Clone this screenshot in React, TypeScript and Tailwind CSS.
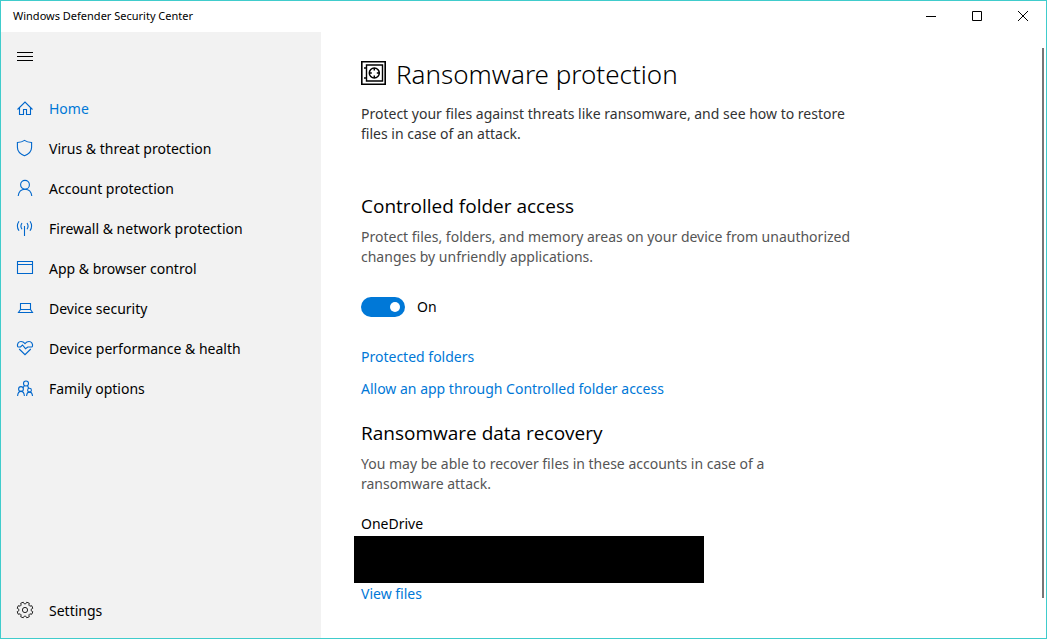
import React, { useState } from "react";

interface NavItem {
  label: string;
  icon: React.ReactNode;
}

const Icon: React.FC<{ children: React.ReactNode }> = ({ children }) => (
  <svg
    className="h-5 w-5 shrink-0"
    viewBox="0 0 20 20"
    fill="none"
    stroke="currentColor"
    strokeWidth="1.1"
    aria-hidden="true"
  >
    {children}
  </svg>
);

const navItems: NavItem[] = [
  {
    label: "Home",
    icon: (
      <Icon>
        <path d="M2.5 11.5 10 4l7.5 7.5M4.5 9.8v6.7h4v-5h3v5h4V9.8" />
      </Icon>
    ),
  },
  {
    label: "Virus & threat protection",
    icon: (
      <Icon>
        <path d="M9.5 2.4c2 1.4 4.3 2 7.1 2.1v4.7c0 3.9-2.9 6.8-7.1 8.5-4.2-1.7-7.1-4.6-7.1-8.5V4.5c2.8-.1 5.1-.7 7.1-2.1z" />
      </Icon>
    ),
  },
  {
    label: "Account protection",
    icon: (
      <Icon>
        <circle cx="10" cy="6.8" r="4.4" />
        <path d="M3.2 18c.5-4 3.1-6.8 6.8-6.8s6.3 2.8 6.8 6.8" />
      </Icon>
    ),
  },
  {
    label: "Firewall & network protection",
    icon: (
      <Icon>
        <path d="M9.5 8v10M4 3.2c-2 3-2 6.6 0 9.6M15 3.2c2 3 2 6.6 0 9.6M7 5c-1.4 2-1.4 4.2 0 6.2M12 5c1.4 2 1.4 4.2 0 6.2" />
      </Icon>
    ),
  },
  {
    label: "App & browser control",
    icon: (
      <Icon>
        <path d="M2.5 3.5h15v12h-15zM2.5 6.5h15" />
      </Icon>
    ),
  },
  {
    label: "Device security",
    icon: (
      <Icon>
        <path d="M5.5 11.5v-6h10v6zM5.5 11.5l-2 3h14l-2-3" />
      </Icon>
    ),
  },
  {
    label: "Device performance & health",
    icon: (
      <Icon>
        <path d="M2.8 9C1.6 6 3.6 3.5 6 3.5c1.800 0 3 .9 4 2.200 1-1.300 2.200-2.200 4-2.200 2.400 0 4.400 2.500 3.200 5.500M4.200 11 10 16.700l5.800-5.700" />
        <path d="M2.800 9h2.700l2-2 3 3.700L12.800 9h4.400" />
      </Icon>
    ),
  },
  {
    label: "Family options",
    icon: (
      <Icon>
        <circle cx="11" cy="5.500" r="2.500" />
        <circle cx="6" cy="11" r="2.400" />
        <circle cx="14.500" cy="12.200" r="1.900" />
        <path d="M2.600 18c.2-2.900 1.500-4.600 3.400-4.600s3.200 1.700 3.400 4.600M11.600 18c.1-2.400 1.200-3.900 2.900-3.900s2.800 1.500 3 3.900M9.300 7.700l-1.200 2M12.600 7.700l1 2.600" />
      </Icon>
    ),
  },
];

const gearPath = (() => {
  const teeth = 8;
  const points: string[] = [];
  for (let i = 0; i < teeth; i++) {
    const a = (i / teeth) * Math.PI * 2;
    [
      [-0.28, 6.2],
      [-0.17, 8],
      [0.17, 8],
      [0.28, 6.2],
    ].forEach(([offset, r]) => {
      const t = a + offset + Math.PI / 8;
      points.push(`${(10 + r * Math.cos(t)).toFixed(2)} ${(10 + r * Math.sin(t)).toFixed(2)}`);
    });
  }
  return `M${points.join("L")}Z`;
})();

const VaultIcon = () => (
  <svg className="h-6 w-[25px] shrink-0" viewBox="0 0 25 24" fill="none" stroke="#000" aria-hidden="true">
    <path d="M.8.8h23.4v22.4H.8z" strokeWidth="1.6" />
    <path d="M5.5 4h16v16h-16z" strokeWidth="1.4" />
    <path d="M3 7h2.5M3 17h2.5" strokeWidth="1.6" />
    <circle cx="13.3" cy="12" r="5" strokeWidth="1.5" />
    <path d="M13.3 7v2.5M13.3 14.5V17M8.3 12h2.5M15.8 12h2.5" strokeWidth="1.5" />
  </svg>
);

const TitleBar = () => (
  <header className="flex h-[31px] shrink-0 items-start justify-between bg-white pl-3">
    <span className="text-[11px] leading-[30px]">Windows Defender Security Center</span>
    <div className="flex h-[30px]">
      <button aria-label="Minimize" className="flex w-[46px] items-center justify-center">
        <svg className="h-3 w-3" viewBox="0 0 12 12" stroke="#000">
          <path d="M1 6.5h10" />
        </svg>
      </button>
      <button aria-label="Maximize" className="flex w-[46px] items-center justify-center">
        <svg className="h-3 w-3" viewBox="0 0 12 12" stroke="#000" fill="none">
          <path d="M1.5 1.5h9v9h-9z" />
        </svg>
      </button>
      <button aria-label="Close" className="flex w-[46px] items-center justify-center">
        <svg className="h-3 w-3" viewBox="0 0 12 12" stroke="#000">
          <path d="m1 1 10 10M11 1 1 11" />
        </svg>
      </button>
    </div>
  </header>
);

const Sidebar = () => (
  <aside className="flex w-80 shrink-0 flex-col bg-[#f2f2f2] pb-2">
    <button aria-label="Menu" className="flex h-12 w-12 items-center justify-center">
      <svg className="h-5 w-5" viewBox="0 0 20 20" stroke="#000">
        <path d="M2 6.5h16M2 10.5h16M2 14.5h16" />
      </svg>
    </button>
    <nav className="mt-2">
      {navItems.map((item, i) => (
        <a
          key={item.label}
          href="#"
          aria-current={i === 0 ? "page" : undefined}
          className="flex h-10 items-center gap-3.5 pl-3.5 text-[#0067cc]"
        >
          {item.icon}
          <span className={i === 0 ? "pt-0.5 text-[#0078d7]" : "pt-0.5 text-black"}>{item.label}</span>
        </a>
      ))}
    </nav>
    <a href="#" className="mt-auto flex h-10 items-center gap-3.5 pl-3.5">
      <Icon>
        <path d={gearPath} stroke="#222" strokeWidth="1" strokeLinejoin="round" />
        <circle cx="10" cy="10" r="2.6" stroke="#222" strokeWidth="1" />
      </Icon>
      <span className="pt-0.5">Settings</span>
    </a>
  </aside>
);

const App: React.FC = () => {
  const [enabled, setEnabled] = useState(true);

  return (
    <div className="flex h-screen flex-col border border-[#40cccc] bg-white font-['Noto_Sans','Open_Sans',sans-serif] text-sm leading-5 text-black">
      <TitleBar />
      <div className="flex min-h-0 flex-1">
        <Sidebar />
        <main className="relative min-w-0 flex-1 overflow-hidden pt-[22px] pl-10">
          <div className="flex items-center gap-2.5">
            <VaultIcon />
            <h1 className="pt-0.5 text-[26px] leading-9 font-light">Ransomware protection</h1>
          </div>
          <p className="mt-3 max-w-[500px] text-[#333]">
            Protect your files against threats like ransomware, and see how to restore files in case of an attack.
          </p>

          <section className="mt-12">
            <h2 className="font-['Open_Sans','Noto_Sans',sans-serif] text-[19px] leading-7">
              Controlled folder access
            </h2>
            <p className="mt-[7px] max-w-[500px] text-[#555]">
              Protect files, folders, and memory areas on your device from unauthorized changes by unfriendly
              applications.
            </p>
            <label className="mt-[29px] flex w-fit items-center gap-3">
              <input
                type="checkbox"
                role="switch"
                checked={enabled}
                onChange={(e) => setEnabled(e.target.checked)}
                className="flex h-5 w-11 appearance-none items-center rounded-full bg-[#888] px-[5px] before:h-2.5 before:w-2.5 before:rounded-full before:bg-white checked:justify-end checked:bg-[#0078d7]"
              />
              <span className="pt-px">{enabled ? "On" : "Off"}</span>
            </label>
            <div className="mt-[30px] flex flex-col items-start gap-3 text-[#0078d7]">
              <a href="#">Protected folders</a>
              <a href="#">Allow an app through Controlled folder access</a>
            </div>
          </section>

          <section className="mt-5">
            <h2 className="font-['Open_Sans','Noto_Sans',sans-serif] text-[19px] leading-7">
              Ransomware data recovery
            </h2>
            <p className="mt-[7px] max-w-[430px] text-[#555]">
              You may be able to recover files in these accounts in case of a ransomware attack.
            </p>
            <h3 className="mt-5">OneDrive</h3>
            <div className="mt-0.5 -ml-[7px] h-[47px] w-[350px] bg-black" />
            <a href="#" className="mt-px block w-fit text-[#0078d7]">
              View files
            </a>
          </section>

          {/* scroll thumb */}
          <div className="absolute top-4 right-0.5 bottom-10 w-0.5 bg-[#767676]" />
        </main>
      </div>
    </div>
  );
};

export default App;
